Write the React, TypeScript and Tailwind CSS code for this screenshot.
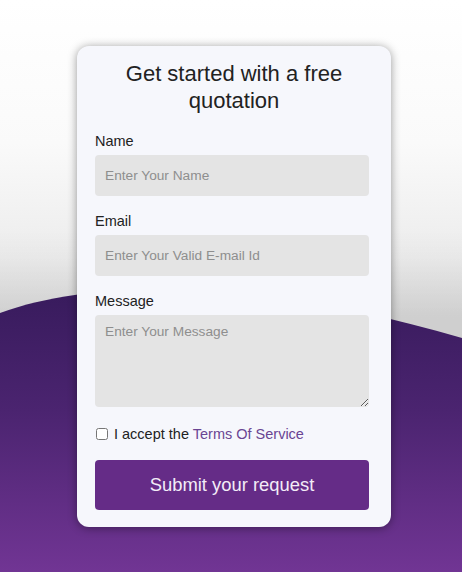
import React from "react";

export default function App() {
  return (
    <div
      className="relative w-full h-[572px] overflow-hidden bg-[linear-gradient(180deg,#ffffff_0%,#fafafa_25%,#ececec_45%,#dcdcdc_55%)]"
      style={{ fontFamily: '"Liberation Sans", Arial, sans-serif' }}
    >
      <svg
        className="absolute inset-0"
        width="462"
        height="572"
        viewBox="0 0 462 572"
        preserveAspectRatio="none"
      >
        <defs>
          <linearGradient id="pg" x1="0" y1="280" x2="0" y2="572" gradientUnits="userSpaceOnUse">
            <stop offset="0" stopColor="#361a5b" />
            <stop offset="0.45" stopColor="#4b2470" />
            <stop offset="1" stopColor="#713594" />
          </linearGradient>
          <linearGradient id="sh" x1="0" y1="230" x2="0" y2="320" gradientUnits="userSpaceOnUse">
            <stop offset="0" stopColor="#000" stopOpacity="0" />
            <stop offset="1" stopColor="#000" stopOpacity="0.06" />
          </linearGradient>
        </defs>
        <rect x="0" y="230" width="462" height="120" fill="url(#sh)" />
        <path d="M0 313 C 120 270, 300 290, 462 338 L 462 572 L 0 572 Z" fill="url(#pg)" />
      </svg>

      <div className="relative flex justify-center pl-[6px] pt-[46px]">
        <div className="w-[314px] h-[481px] rounded-[12px] bg-[#f6f7fc] shadow-[0_1px_10px_rgba(0,0,0,0.4)] px-[18px] pt-[14px]">
          <h1 className="text-center text-[22px] leading-[27px] text-[#222222] font-normal">
            Get started with a free
            <br />
            quotation
          </h1>

          <label className="block mt-[18px] h-[18px] text-[14.5px] leading-[18px] text-[#222222]">Name</label>
          <input
            type="text"
            placeholder="Enter Your Name"
            className="mt-[5px] block w-[274px] h-[41px] rounded-[4px] bg-[#e4e4e4] pl-[10px] text-[13.7px] text-[#333] outline-none placeholder:text-[#8e8e8e]"
          />

          <label className="block mt-[16px] h-[18px] text-[14.5px] leading-[18px] text-[#222222]">Email</label>
          <input
            type="text"
            placeholder="Enter Your Valid E-mail Id"
            className="mt-[5px] block w-[274px] h-[41px] rounded-[4px] bg-[#e4e4e4] pl-[10px] text-[13.7px] text-[#333] outline-none placeholder:text-[#8e8e8e]"
          />

          <label className="block mt-[16px] h-[18px] text-[14.5px] leading-[18px] text-[#222222]">Message</label>
          <textarea
            placeholder="Enter Your Message"
            className="mt-[5px] block w-[274px] h-[92px] rounded-[4px] bg-[#e4e4e4] pl-[10px] pt-[8px] text-[13.7px] leading-[17px] text-[#333] outline-none placeholder:text-[#8e8e8e]"
          />

          <div className="mt-[18px] h-[18px] flex items-center text-[14.5px] leading-[18px] text-[#222222]">
            <input type="checkbox" className="w-[12px] h-[12px] m-0 ml-[1px] mr-[6px]" />
            <span>
              I accept the <a className="text-[#6a4593]">Terms Of Service</a>
            </span>
          </div>

          <button className="mt-[17px] w-[274px] h-[50px] rounded-[4px] bg-[#652c87] text-[18.4px] text-[#f3ecf7]">
            Submit your request
          </button>
        </div>
      </div>
    </div>
  );
}
